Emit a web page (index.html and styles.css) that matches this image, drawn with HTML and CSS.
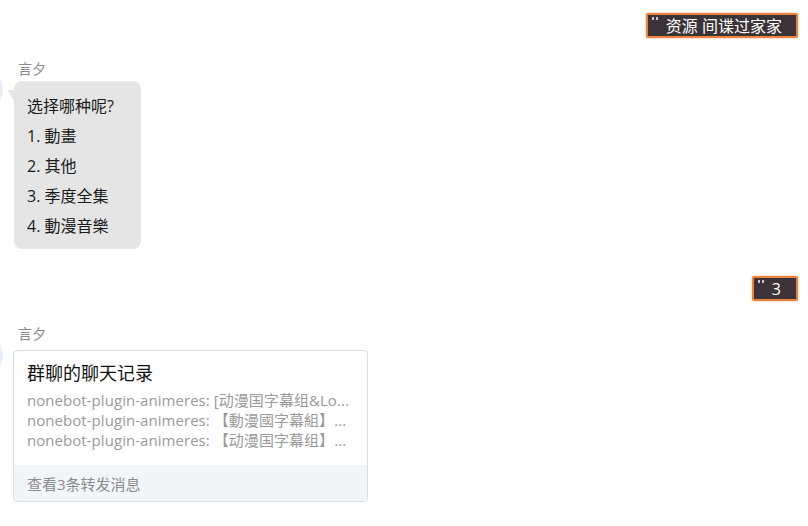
FILE: index.html
```html
<!DOCTYPE html>
<html lang="zh">
<head>
<meta charset="utf-8">
<link rel="stylesheet" href="styles.css">
</head>
<body>
<div class="chat">
  <div class="row self first">
    <div class="tag"><span class="dots"><i></i><i></i></span>资源 间谍过家家</div>
  </div>

  <div class="row other">
    <div class="avatar"></div>
    <div class="msg">
      <div class="name">言夕</div>
      <div class="bubble">
        <div>选择哪种呢?</div>
        <div>1. 動畫</div>
        <div>2. 其他</div>
        <div>3. 季度全集</div>
        <div>4. 動漫音樂</div>
      </div>
    </div>
  </div>

  <div class="row self second">
    <div class="tag small"><span class="dots"><i></i><i></i></span>3</div>
  </div>

  <div class="row other card-row">
    <div class="avatar"></div>
    <div class="msg">
      <div class="name">言夕</div>
      <div class="card">
        <div class="card-body">
          <div class="card-title">群聊的聊天记录</div>
          <div class="card-line">nonebot-plugin-animeres: [动漫国字幕组&amp;Lo...</div>
          <div class="card-line">nonebot-plugin-animeres: 【動漫國字幕組】...</div>
          <div class="card-line">nonebot-plugin-animeres: 【动漫国字幕组】...</div>
        </div>
        <div class="card-foot">查看3条转发消息</div>
      </div>
    </div>
  </div>
</div>
</body>
</html>
```
FILE: styles.css
```css
* { box-sizing: border-box; }
html, body { margin: 0; padding: 0; background: #ffffff; }
body {
  font-family: "Open Sans", "Noto Sans CJK SC", sans-serif;
  color: #1a1a1a;
  overflow: hidden;
  width: 808px;
  height: 526px;
}
.chat { display: flex; flex-direction: column; }
.row { display: flex; }
.row.self { justify-content: flex-end; padding-right: 10px; }
.row.first { margin-top: 13px; }
.row.second { margin-top: 27px; }

.tag {
  height: 25px;
  display: flex;
  align-items: center;
  padding: 0 14px 0 4px;
  background: #3b3337;
  border: 2px solid #e9843e;
  border-radius: 2px;
  box-shadow: 0 0 2px #f0a060;
  color: #ffffff;
  font-size: 16px;
  line-height: 1;
}
.tag.small { padding-right: 15px; }
.dots {
  display: flex;
  gap: 2px;
  align-self: flex-start;
  margin-top: 2px;
  margin-right: 8px;
}
.dots i {
  display: block;
  width: 2px;
  height: 3px;
  background: #c8c8c8;
}

.row.other { margin-top: 22px; }
.row.card-row { margin-top: 24px; }
.avatar {
  width: 40px;
  height: 40px;
  margin-left: -37px;
  margin-right: 11px;
  margin-top: 10px;
  border-radius: 50%;
  background: #e6eef8;
  flex-shrink: 0;
}
.card-row .avatar { margin-right: 10px; }
.msg { display: flex; flex-direction: column; }
.name {
  font-size: 14px;
  line-height: 18px;
  color: #8a8a8a;
  margin-left: 4px;
  margin-bottom: 3px;
}
.card-row .name { margin-left: 5px; margin-bottom: 7px; }
.bubble {
  position: relative;
  background: #e5e5e5;
  border-radius: 8px;
  padding: 10px 27px 8px 13px;
  font-size: 16px;
  line-height: 30px;
  color: #1a1a1a;
}
.bubble::before {
  content: "";
  position: absolute;
  left: -7px;
  top: 9px;
  width: 0;
  height: 0;
  border-right: 8px solid #e5e5e5;
  border-bottom: 12px solid transparent;
}

.card {
  width: 355px;
  border: 1px solid #d7e0ea;
  border-radius: 4px;
  background: #ffffff;
  overflow: hidden;
}
.card-body { padding: 10px 13px 15px 13px; }
.card-title {
  font-size: 18px;
  line-height: 24px;
  color: #111111;
  margin-bottom: 5px;
}
.card-line {
  font-size: 15px;
  line-height: 20px;
  letter-spacing: 0.05px;
  color: #9a9a9a;
  white-space: nowrap;
}
.card-foot {
  background: #f3f6f9;
  height: 36px;
  display: flex;
  align-items: center;
  padding-left: 13px;
  font-size: 15px;
  color: #8c8c8c;
}
```
